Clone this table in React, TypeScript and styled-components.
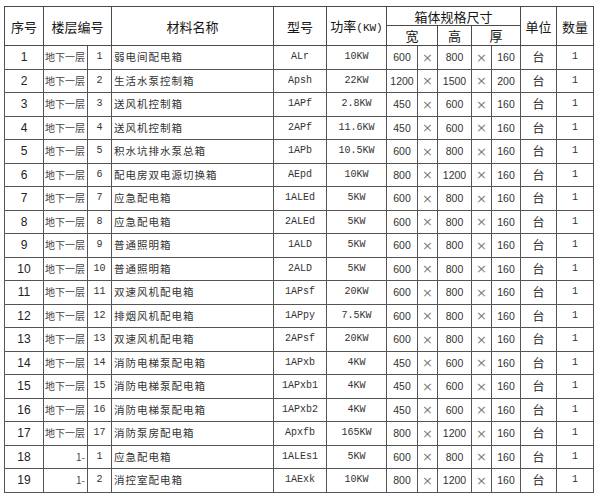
import React from 'react'
import styled, { createGlobalStyle } from 'styled-components'

const GlobalStyle = createGlobalStyle`
html, body {
  margin: 0;
  padding: 0;
  background: #ffffff;
}
`

const Page = styled.div`
padding: 6px 0 0 4px;
`

const Sheet = styled.table`
border-collapse: collapse;
table-layout: fixed;
width: 589px;
border: 1px solid #222;
color: #1e1e1e;
`

const HeadCell = styled.th<{ $h?: number }>`
border: 1px solid #4a4a4a;
padding: 0;
height: ${p => p.$h ?? 18}px;
font-family: "Noto Sans CJK SC", "Noto Sans", sans-serif;
font-weight: 400;
font-size: 13px;
line-height: 1;
text-align: center;
vertical-align: middle;
color: #161616;
`

const Unit = styled.span`
font-family: "Liberation Mono", monospace;
font-size: 11px;
`

type Face = 'sans' | 'mono' | 'cjk'

const faces: Record<Face, string> = {
  sans: '"Liberation Sans", Arial, sans-serif',
  mono: '"Liberation Mono", "Noto Sans CJK SC", monospace',
  cjk: '"Noto Sans CJK SC", sans-serif',
}

const Cell = styled.td<{ $align?: string; $face?: Face; $size?: number; $color?: string; $spacing?: number }>`
border: 1px solid #555;
padding: 0 2px;
height: 23.5px;
box-sizing: border-box;
white-space: nowrap;
overflow: hidden;
text-align: ${p => p.$align ?? 'center'};
font-family: ${p => faces[p.$face ?? 'sans']};
font-size: ${p => p.$size ?? 11}px;
letter-spacing: ${p => p.$spacing ?? 0}px;
color: ${p => p.$color ?? '#222'};
line-height: 1;
vertical-align: middle;
`

const Times = styled(Cell)`
color: #808080;
font-family: "DejaVu Sans", sans-serif;
font-size: 13px;
`

type Row = [string, string, string, string, string, string, string, string, string]

const rows: Row[] = [
  ['地下一层', '1', '弱电间配电箱', 'ALr', '10KW', '600', '800', '160', '1'],
  ['地下一层', '2', '生活水泵控制箱', 'Apsh', '22KW', '1200', '1500', '200', '1'],
  ['地下一层', '3', '送风机控制箱', '1APf', '2.8KW', '450', '600', '160', '1'],
  ['地下一层', '4', '送风机控制箱', '2APf', '11.6KW', '450', '600', '160', '1'],
  ['地下一层', '5', '积水坑排水泵总箱', '1APb', '10.5KW', '600', '800', '160', '1'],
  ['地下一层', '6', '配电房双电源切换箱', 'AEpd', '10KW', '800', '1200', '160', '1'],
  ['地下一层', '7', '应急配电箱', '1ALEd', '5KW', '600', '800', '160', '1'],
  ['地下一层', '8', '应急配电箱', '2ALEd', '5KW', '600', '800', '160', '1'],
  ['地下一层', '9', '普通照明箱', '1ALD', '5KW', '600', '800', '160', '1'],
  ['地下一层', '10', '普通照明箱', '2ALD', '5KW', '600', '800', '160', '1'],
  ['地下一层', '11', '双速风机配电箱', '1APsf', '20KW', '600', '800', '160', '1'],
  ['地下一层', '12', '排烟风机配电箱', '1APpy', '7.5KW', '600', '800', '160', '1'],
  ['地下一层', '13', '双速风机配电箱', '2APsf', '20KW', '600', '800', '160', '1'],
  ['地下一层', '14', '消防电梯泵配电箱', '1APxb', '4KW', '450', '600', '160', '1'],
  ['地下一层', '15', '消防电梯泵配电箱', '1APxb1', '4KW', '450', '600', '160', '1'],
  ['地下一层', '16', '消防电梯泵配电箱', '1APxb2', '4KW', '450', '600', '160', '1'],
  ['地下一层', '17', '消防泵房配电箱', 'Apxfb', '165KW', '800', '1200', '160', '1'],
  ['1-', '1', '应急配电箱', '1ALEs1', '5KW', '600', '800', '160', '1'],
  ['1-', '2', '消控室配电箱', '1AExk', '10KW', '800', '1200', '160', '1'],
]

const widths = [39, 44, 24, 162, 53, 60, 31, 20, 34, 20, 29, 36, 37]

export default function App() {
  return (
    <>
      <GlobalStyle />
      <Page>
        <Sheet>
          <colgroup>
            {widths.map((w, i) => <col key={i} style={{ width: w }} />)}
          </colgroup>
          <thead>
            <tr>
              <HeadCell rowSpan={2}>序号</HeadCell>
              <HeadCell rowSpan={2} colSpan={2}>楼层编号</HeadCell>
              <HeadCell rowSpan={2}>材料名称</HeadCell>
              <HeadCell rowSpan={2}>型号</HeadCell>
              <HeadCell rowSpan={2}>功率<Unit>(KW)</Unit></HeadCell>
              <HeadCell colSpan={5}>箱体规格尺寸</HeadCell>
              <HeadCell rowSpan={2}>单位</HeadCell>
              <HeadCell rowSpan={2}>数量</HeadCell>
            </tr>
            <tr>
              <HeadCell $h={19} colSpan={2}>宽</HeadCell>
              <HeadCell $h={19}>高</HeadCell>
              <HeadCell $h={19} colSpan={2}>厚</HeadCell>
            </tr>
          </thead>
          <tbody>
            {rows.map((r, i) => (
              <tr key={i}>
                <Cell $size={12}>{i + 1}</Cell>
                <Cell $align={r[0] === '1-' ? 'right' : 'left'} $face="cjk" $size={10} $color="#444" style={{ paddingLeft: 1 }}>{r[0]}</Cell>
                <Cell $face="mono" $size={10} $color="#333">{r[1]}</Cell>
                <Cell $align="left" $face="cjk" $size={10.5} $spacing={1} $color="#333">{r[2]}</Cell>
                <Cell $face="mono" $size={10} $color="#333">{r[3]}</Cell>
                <Cell $face="mono" $size={10} $color="#333">{r[4]}</Cell>
                <Cell $size={10.5} $color="#333">{r[5]}</Cell>
                <Times>×</Times>
                <Cell $size={10.5} $color="#333">{r[6]}</Cell>
                <Times>×</Times>
                <Cell $size={10.5} $color="#333">{r[7]}</Cell>
                <Cell $face="cjk" $size={12}>台</Cell>
                <Cell $face="mono" $size={10} $color="#333">{r[8]}</Cell>
              </tr>
            ))}
          </tbody>
        </Sheet>
      </Page>
    </>
  )
}
